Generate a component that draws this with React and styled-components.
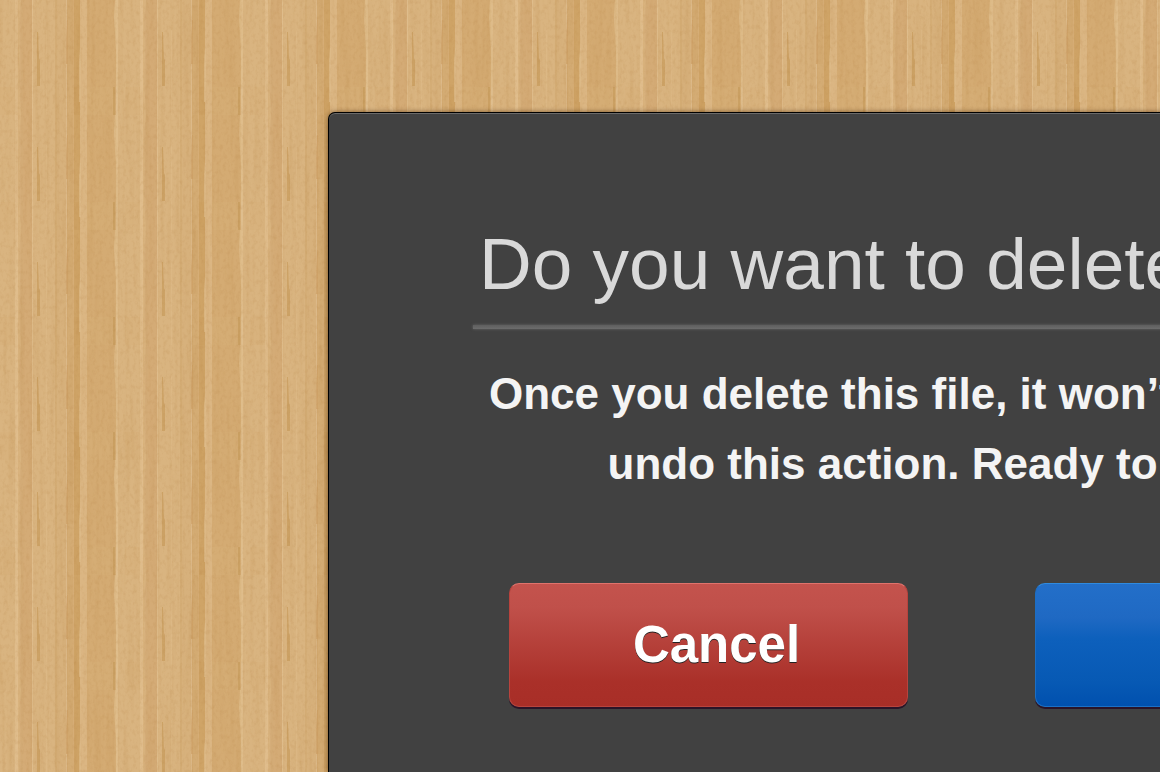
import React from "react";
import styled, { createGlobalStyle } from "styled-components";

const GlobalStyle = createGlobalStyle`
  *, *::before, *::after { box-sizing: border-box; }
  body {
    margin: 0;
    overflow: hidden;
    font-family: "Liberation Sans", Arial, Helvetica, sans-serif;
    background: #d7b07a;
  }
`;

const Page = styled.main`
  position: relative;
  display: flex;
  min-height: 100vh;
  padding: 112px 0 0 328px;
  overflow: hidden;
`;

const WoodSurface = styled.svg`
  position: absolute;
  inset: 0;
  z-index: -1;
  width: 100%;
  height: 100%;
`;

const Dialog = styled.section`
  flex: none;
  min-height: calc(100vh - 112px);
  padding: 112px 144px 60px;
  border: 1px solid #000;
  border-bottom: 0;
  border-radius: 7px 7px 0 0;
  background: #414141;
  box-shadow: 0 0 5px rgba(60, 30, 0, 0.6), inset 0 1px 0 #6a6a6a;
`;

const Title = styled.h1`
  margin: 0;
  padding: 0 0 0 6px;
  font-size: 73px;
  font-weight: 400;
  line-height: 78px;
  color: #d9d9d9;
  white-space: nowrap;
`;

const Rule = styled.hr`
  height: 4px;
  margin: 22px 0 0;
  border: 0;
  background: linear-gradient(#5e5e5e, #6c6c6c);
  box-shadow: 0 0 3px #6a6a6a;
`;

const Message = styled.p`
  margin: 30px 0 0;
  padding: 0 16px;
  font-size: 44px;
  font-weight: 700;
  line-height: 70px;
  color: #f4f4f4;
  text-align: center;
  white-space: nowrap;
`;

const Actions = styled.div`
  display: flex;
  gap: 127px;
  margin: 84px 0 0 36px;
`;

const Button = styled.button`
  width: 399px;
  height: 124px;
  padding: 0 0 0 16px;
  border: 1px solid ${(p) => p.$edge};
  border-top-color: ${(p) => p.$shine};
  border-radius: 10px;
  background: ${(p) => p.$fill} border-box;
  box-shadow: 0 2px 0 #2a1428;
  font: 700 51px/60px "Liberation Sans", Arial, Helvetica, sans-serif;
  color: #fff;
  text-shadow: 0 1px 0 #222;
`;

/* [left, width, colour] of each board in one 125px repeat */
const boards = [
  [0, 15, "#d9b480"], [15, 3, "#debb89"], [18, 3, "#d9b37e"], [21, 11, "#d4ab76"],
  [32, 1, "#dfbd8c"], [33, 22, "#d9b480"], [55, 2, "#d4ad76"], [57, 9, "#d7b17c"],
  [66, 1, "#dcb989"], [67, 7, "#d2a970"], [74, 6, "#cfa467"], [80, 7, "#dbb683"],
  [87, 29, "#d5ad75"], [116, 2, "#dfbe8e"], [118, 7, "#d9b480"],
];

/* [path, colour, opacity] of the marks that lie over the boards */
const marks = [
  ["M37 32 L38 32 L39 58 L40 60 L40 86 L37 86 Z", "#c1914e", 0.5],
  ["M0 87 H15 V115 H0 Z", "#cfa66d", 0.12],
  ["M21 0 L19 24 L20 52 L19 80 L21 115 L23 115 L23 0 Z", "#d4ab76", 0.7],
  ["M15 0 Q18 30 16 58 T17 115 L18 115 V0 Z", "#e2c08f", 0.5],
  ["M67 20 L66 38 L66 64 L68 64 L68 20 Z", "#cda267", 0.7],
  ["M68 64 h5 v51 h-5 Z", "#d6ad76", 0.6],
  ["M74 87 h6 v28 h-6 Z", "#c99a5a", 0.35],
  ["M73 0 h1 v115 h-1 Z", "#d9b17b", 0.5],
  ["M80 48 L79 60 L79 102 L81 102 L81 48 Z", "#dfbc8a", 0.7],
  ["M87 0 H115 V87 H87 Z", "#cca069", 0.14],
  ["M113 87 h2 v28 h-2 Z", "#c29554", 0.5],
  ["M115 0 L114 18 L116 50 L116 87 L118 87 L118 0 Z", "#dfbd8b", 0.8],
  ["M46 30 h1 v85 h-1 Z", "#e0bd8b", 0.4],
];

function Wood() {
  return (
    <WoodSurface aria-hidden="true">
      <defs>
        <pattern id="planks" width="125" height="115" patternUnits="userSpaceOnUse">
          {boards.map(([x, w, fill]) => (
            <rect key={x} x={x} width={w} height="115" fill={fill} />
          ))}
          {marks.map(([d, fill, opacity]) => (
            <path key={d} d={d} fill={fill} opacity={opacity} />
          ))}
        </pattern>
        <filter id="fibre" x="0" y="0" width="100%" height="100%" colorInterpolationFilters="sRGB">
          <feTurbulence type="fractalNoise" baseFrequency="0.2 0.01" numOctaves="2" seed="4" />
          <feColorMatrix values="0 0 0 0 0.7  0 0 0 0 0.5  0 0 0 0 0.24  1.6 0 0 0 -0.72" />
        </filter>
        <filter id="grain" x="0" y="0" width="100%" height="100%" colorInterpolationFilters="sRGB">
          <feTurbulence type="fractalNoise" baseFrequency="0.3 0.2" numOctaves="3" seed="9" />
          <feColorMatrix values="0 0 0 0 0.7  0 0 0 0 0.5  0 0 0 0 0.26  0 1.8 0 0 -0.82" />
        </filter>
      </defs>
      <rect width="100%" height="100%" fill="url(#planks)" />
      <rect width="100%" height="100%" filter="url(#fibre)" opacity="0.18" />
      <rect width="100%" height="100%" filter="url(#grain)" opacity="0.22" />
    </WoodSurface>
  );
}

export default function App() {
  return (
    <Page>
      <GlobalStyle />
      <Wood />
      <Dialog role="dialog" aria-labelledby="title" aria-describedby="message">
        <Title id="title">Do you want to delete this file?</Title>
        <Rule />
        <Message id="message">
          Once you delete this file, it won’t be possible to
          <br />
          undo this action. Ready to delete it?
        </Message>
        <Actions>
          <Button type="button" $edge="#b8433d" $shine="#e0736c" $fill="linear-gradient(#c4534d, #c0504a 20%, #aa3029 80%, #a82e27)">
            Cancel
          </Button>
          <Button type="button" $edge="#1c6fc4" $shine="#2f8be0" $fill="linear-gradient(#236fc9, #1f69c3 28%, #0d60bc 45%, #0759b4 80%, #0050ae)">
            Delete
          </Button>
        </Actions>
      </Dialog>
    </Page>
  );
}
